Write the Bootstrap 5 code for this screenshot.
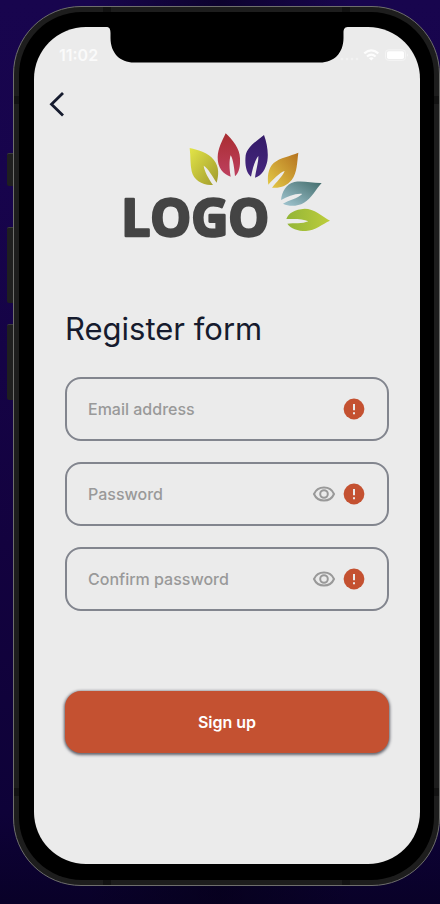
<!DOCTYPE html>
<html lang="en">
<head>
<meta charset="utf-8">
<meta name="viewport" content="width=device-width, initial-scale=1">
<title>Register form</title>
<link href="https://cdn.jsdelivr.net/npm/bootstrap@5.3.0/dist/css/bootstrap.min.css" rel="stylesheet">
<style>
  body {
    font-family: Inter, "Liberation Sans", sans-serif;
    background: linear-gradient(90deg, transparent 20%, #05001899 50%, transparent 80%),
                linear-gradient(#18054e, #17044c 20%, #13023f 60%, #0e0238 90%, #090128);
    padding: 6px 0 18px;
  }
  .side-rail { width: 13px; padding-top: 147px; gap: 21px; }
  .side-key { width: 6px; height: 76px; background: #1f1f1f; border-top: 1px solid #3c3c3c; border-radius: 2px 0 0 2px; }
  .side-key.mute { height: 33px; margin-bottom: 20px; }
  .phone {
    --band: #121212;
    border: 1px solid #6e6e6c; border-radius: 68px; padding: 5px;
    background:
      linear-gradient(var(--band), var(--band)) left 89px top 0 / 8px 100% no-repeat,
      linear-gradient(var(--band), var(--band)) right 89px top 0 / 8px 100% no-repeat,
      linear-gradient(var(--band), var(--band)) left 0 top 89px / 100% 8px no-repeat,
      linear-gradient(var(--band), var(--band)) left 0 bottom 89px / 100% 8px no-repeat,
      #1d1d1d;
  }
  .bezel { background: #000; border-radius: 63px; padding: 15px 14px 16px 15px; }
  .screen { background: #ebebeb; border-radius: 52px; overflow: hidden; }
  .clock { font-size: 16px; line-height: 16px; font-weight: 600; padding-top: 20px; color: #fafafa; }
  .status-icons { padding-top: 20px; }
  .back { margin: 27px 0 0 14px; width: 20px; height: 28px; }
  .page { padding: 12px 31px 32px; }
  .page h1 { font-size: 31px; line-height: 40px; font-weight: 400; color: #161b2e; margin: 69px 0 28px; }
  .fields { gap: 21px; }
  .field { height: 64px; border: 2px solid #82858e; border-radius: 16px; padding: 0 22px 0 21px; gap: 7px; }
  .field:focus-within { border-color: #161b2e; }
  .field input { font-size: 16px; line-height: 24px; font-weight: 500; color: #161b2e; }
  .field input::placeholder { color: #999; opacity: 1; }
  .field input:focus { box-shadow: none; background: transparent; }
  .signup, .signup:hover {
    height: 62px; margin-top: 80px; border: 0; border-radius: 16px;
    background: #c45131; color: #fff; font-size: 16px; font-weight: 600;
    box-shadow: 0 1px 3px 1px #63636c;
  }
</style>
<script src="https://cdn.jsdelivr.net/npm/bootstrap@5.3.0/dist/js/bootstrap.bundle.min.js"></script>
</head>
<body class="d-flex min-vh-100">
  <div class="side-rail d-flex flex-column align-items-end flex-shrink-0">
    <div class="side-key mute"></div>
    <div class="side-key"></div>
    <div class="side-key"></div>
  </div>
  <div class="phone d-flex flex-grow-1">
    <div class="bezel d-flex flex-grow-1">
      <div class="screen flex-grow-1">
        <header class="d-flex align-items-start">
          <div class="clock flex-fill text-end w-25 pe-2">11:02</div>
          <svg class="flex-shrink-0" width="244" height="36" viewBox="1 0 244 36" aria-hidden="true"><path d="M0 0C4 0 5.500 1 5.500 6V11C5.500 26 15 35.500 29 35.500H215C229 35.500 238.500 26 238.500 11V6C238.500 1 240 0 244 0Z"/></svg>
          <div class="status-icons flex-fill w-25">
            <svg class="overflow-visible d-block" width="64" height="16" viewBox="350 47 64 16" role="img" aria-label="Wi-Fi connected, battery full">
              <g fill="#f2f2f2"><circle cx="342" cy="59" r="1.300"/><circle cx="347" cy="59" r="1.300"/><circle cx="352" cy="59" r="1.300"/><circle cx="357" cy="59" r="1.300"/></g>
              <g fill="none" stroke="#fdfdfd" stroke-width="2.200"><path d="M364.300 53.400Q371.300 47.200 378.300 53.400"/><path d="M367 56.500Q371.300 52.700 375.600 56.500"/></g>
              <path d="M371.300 60.500L368.900 58.200Q371.300 56.200 373.700 58.200Z" fill="#fdfdfd"/>
              <rect x="385.500" y="49.800" width="20" height="10.600" rx="3" fill="none" stroke="#f4f4f4"/>
              <rect x="387" y="51.200" width="17" height="7.800" rx="1.800" fill="#fff"/>
              <path d="M407 53.500Q409 55 407 56.800Z" fill="#f4f4f4"/>
            </svg>
          </div>
        </header>
        <button type="button" class="back btn p-0 border-0 d-block" aria-label="Back">
          <svg class="d-block" width="20" height="28" viewBox="0 0 20 28"><path d="M15 3L3.500 14.300L15 25.500" fill="none" stroke="#161b2e" stroke-width="2.800"/></svg>
        </button>
        <main class="page">
          <svg class="d-block mx-auto overflow-visible" width="213" height="110" viewBox="33 30 639 330" role="img" aria-label="Logo">
            <defs>
              <linearGradient id="lime" x1="0" y1="0" x2="1" y2="1"><stop stop-color="#e3e548"/><stop offset="1" stop-color="#a09a2c"/></linearGradient>
              <linearGradient id="red" x1="0" y1="0" x2="0" y2="1"><stop stop-color="#a92d31"/><stop offset="1" stop-color="#be405f"/></linearGradient>
              <linearGradient id="violet" x1="0" y1="0" x2="0" y2="1"><stop stop-color="#341b68"/><stop offset="1" stop-color="#45267e"/></linearGradient>
              <linearGradient id="gold" x1="1" y1="0" x2="0" y2="1"><stop stop-color="#b5721f"/><stop offset="1" stop-color="#e4cb48"/></linearGradient>
              <linearGradient id="teal" x1="1" y1="0" x2="0" y2="1"><stop stop-color="#426c6b"/><stop offset="1" stop-color="#a4c8d3"/></linearGradient>
              <linearGradient id="green" x1="0" y1="0" x2="1" y2="0"><stop stop-color="#93b538"/><stop offset="1" stop-color="#bdcd3b"/></linearGradient>
            </defs>
            <text x="34" y="347" font-family="'Open Sans', sans-serif" font-weight="700" font-size="154" fill="#444" stroke="#444" stroke-width="8" stroke-linejoin="round">LOGO</text>
            <path fill="url(#lime)" d="M239 84C266 90 295 99 311 119C329 141 326 166 320 188C308 170 295 146 281 137C284 156 296 176 309 195C279 198 251 181 245 154C240 132 242 108 239 84Z"/>
            <path fill="url(#red)" d="M347 40C368 60 389 85 390 115C391 139 388 157 375 169C373 148 370 119 362 106C357 121 358 148 362 170C340 163 322 143 323 111C324 86 336 63 347 40Z"/>
            <path fill="url(#violet)" d="M462 45C471 69 476 99 472 123C467 148 455 167 435 173C438 150 446 124 445 108C434 122 428 146 423 170C408 158 404 132 407 106C412 80 439 64 462 45Z"/>
            <path fill="url(#gold)" d="M565 98C561 126 562 158 545 180C530 198 508 206 486 203C500 185 518 169 524 153C508 158 490 178 475 194C472 171 473 147 491 129C511 112 540 109 565 98Z"/>
            <path fill="url(#teal)" d="M635 189C617 207 606 235 582 248C561 260 537 260 519 251C537 240 562 236 577 222C558 219 532 231 513 240C516 215 528 193 553 186C579 181 608 190 635 189Z"/>
            <path fill="url(#green)" d="M660 302C637 312 616 331 588 333C563 333 542 326 532 311C552 309 577 312 595 304C579 295 550 297 529 297C535 279 555 268 584 266C612 266 636 288 660 302Z"/>
          </svg>
          <h1>Register form</h1>
          <form>
            <div class="fields d-flex flex-column">
              <div class="field d-flex align-items-center">
                <label class="visually-hidden" for="email">Email address</label>
                <input class="form-control border-0 bg-transparent p-0" id="email" type="email" placeholder="Email address">
                <svg class="flex-shrink-0" width="22" height="22" viewBox="0 0 22 22" role="img" aria-label="Required"><circle cx="11" cy="11" r="10.400" fill="#c45131"/><path d="M11 6V12.200M11 14.200V16.300" stroke="#ebebeb" stroke-width="2"/></svg>
              </div>
              <div class="field d-flex align-items-center">
                <label class="visually-hidden" for="password">Password</label>
                <input class="form-control border-0 bg-transparent p-0" id="password" type="password" placeholder="Password">
                <button type="button" class="btn p-0 border-0 d-flex flex-shrink-0" aria-label="Show password">
                  <svg width="24" height="18" viewBox="0 0 24 18" fill="none" stroke="#999" stroke-width="2"><path d="M2 9C4 4.300 7.800 2.500 12 2.500S20 4.300 22 9C20 13.700 16.200 15.500 12 15.500S4 13.700 2 9Z"/><circle cx="12" cy="9" r="3.800"/></svg>
                </button>
                <svg class="flex-shrink-0" width="22" height="22" viewBox="0 0 22 22" role="img" aria-label="Required"><circle cx="11" cy="11" r="10.400" fill="#c45131"/><path d="M11 6V12.200M11 14.200V16.300" stroke="#ebebeb" stroke-width="2"/></svg>
              </div>
              <div class="field d-flex align-items-center">
                <label class="visually-hidden" for="confirm">Confirm password</label>
                <input class="form-control border-0 bg-transparent p-0" id="confirm" type="password" placeholder="Confirm password">
                <button type="button" class="btn p-0 border-0 d-flex flex-shrink-0" aria-label="Show confirmed password">
                  <svg width="24" height="18" viewBox="0 0 24 18" fill="none" stroke="#999" stroke-width="2"><path d="M2 9C4 4.300 7.800 2.500 12 2.500S20 4.300 22 9C20 13.700 16.200 15.500 12 15.500S4 13.700 2 9Z"/><circle cx="12" cy="9" r="3.800"/></svg>
                </button>
                <svg class="flex-shrink-0" width="22" height="22" viewBox="0 0 22 22" role="img" aria-label="Required"><circle cx="11" cy="11" r="10.400" fill="#c45131"/><path d="M11 6V12.200M11 14.200V16.300" stroke="#ebebeb" stroke-width="2"/></svg>
              </div>
            </div>
            <button type="submit" class="signup btn w-100">Sign up</button>
          </form>
        </main>
      </div>
    </div>
  </div>
</body>
</html>
